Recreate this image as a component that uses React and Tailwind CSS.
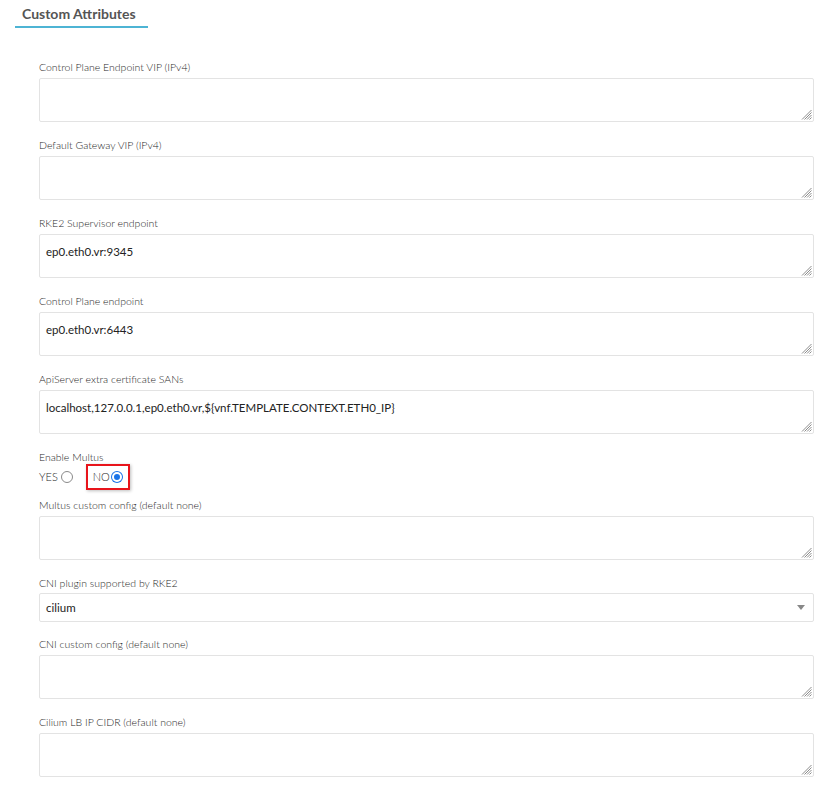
import React from "react";

const font = { fontFamily: "Lato, 'Open Sans', sans-serif" };

function Grip() {
  return (
    <svg className="absolute right-[2px] bottom-[2px]" width="11" height="11" viewBox="0 0 11 11">
      <g stroke="#8c8c8c" strokeWidth="1">
        <line x1="10.5" y1="1" x2="1" y2="10.5" />
        <line x1="10.5" y1="3.5" x2="3.5" y2="10.5" />
        <line x1="10.5" y1="6" x2="6" y2="10.5" />
        <line x1="10.5" y1="8.5" x2="8.5" y2="10.5" />
      </g>
    </svg>
  );
}

function Label({ children, className = "" }) {
  return <div className={"text-[10.5px] font-light leading-[14px] text-[#1f1f1f] " + className}>{children}</div>;
}

function Area({ label, value = "" }) {
  return (
    <div className="mb-[16px]">
      <Label className="mb-[4px]">{label}</Label>
      <div className="relative w-[775px] h-[44px]">
        <textarea
          defaultValue={value}
          className="block w-full h-full resize-none border border-[#e3e3e3] rounded-[2px] bg-white px-[6px] pt-[10px] text-[11.5px] leading-[14px] text-[#222] outline-none"
          style={font}
        />
        <Grip />
      </div>
    </div>
  );
}

function Radio({ checked }) {
  return checked ? (
    <span className="inline-flex items-center justify-center w-[12px] h-[12px] rounded-full bg-[#1a73e8]">
      <span className="w-[10px] h-[10px] rounded-full border-2 border-white bg-[#1a73e8]" />
    </span>
  ) : (
    <span className="inline-block w-[12px] h-[12px] rounded-full border border-[#8a8a8a] bg-white" />
  );
}

export default function App() {
  return (
    <div className="w-[836px] h-[785px] bg-white overflow-hidden pl-[15px] pt-[6px]" style={font}>
      {/* Section tab */}
      <div className="w-[133px] pl-[7px] pb-[5px] border-b-2 border-[#4db4d4] text-[14px] font-bold leading-[15px] text-[#555]">
        Custom Attributes
      </div>

      <div className="pl-[24px] pt-[32px]">
        <Area label="Control Plane Endpoint VIP (IPv4)" />
        <Area label="Default Gateway VIP (IPv4)" />
        <Area label="RKE2 Supervisor endpoint" value="ep0.eth0.vr:9345" />
        <Area label="Control Plane endpoint" value="ep0.eth0.vr:6443" />
        <Area
          label="ApiServer extra certificate SANs"
          value="localhost,127.0.0.1,ep0.eth0.vr,${vnf.TEMPLATE.CONTEXT.ETH0_IP}"
        />

        {/* Enable Multus */}
        <Label>Enable Multus</Label>
        <div className="flex items-center h-[26px] text-[11px] font-light text-[#1f1f1f]">
          <span className="flex items-center gap-[3px]">
            YES <Radio />
          </span>
          <span className="ml-[13px] flex items-center gap-[1px] h-[26px] px-[5px] border-2 border-[#e8141b] shadow-[1px_1px_3px_rgba(0,0,0,0.25)]">
            NO <Radio checked />
          </span>
        </div>
        <div className="mt-[8px]">
          <Area label="Multus custom config (default none)" />
        </div>

        {/* CNI select */}
        <div className="mb-[15px]">
          <Label className="mb-[3px]">CNI plugin supported by RKE2</Label>
          <div className="w-[775px] h-[29px] border border-[#e3e3e3] rounded-[2px] flex items-center justify-between px-[6px] text-[11.5px] text-[#222]">
            <span>cilium</span>
            <span className="w-0 h-0 border-l-[4px] border-r-[4px] border-t-[5px] border-l-transparent border-r-transparent border-t-[#888] mr-[2px]" />
          </div>
        </div>

        <Area label="CNI custom config (default none)" />
        <Area label="Cilium LB IP CIDR (default none)" />
      </div>
    </div>
  );
}
